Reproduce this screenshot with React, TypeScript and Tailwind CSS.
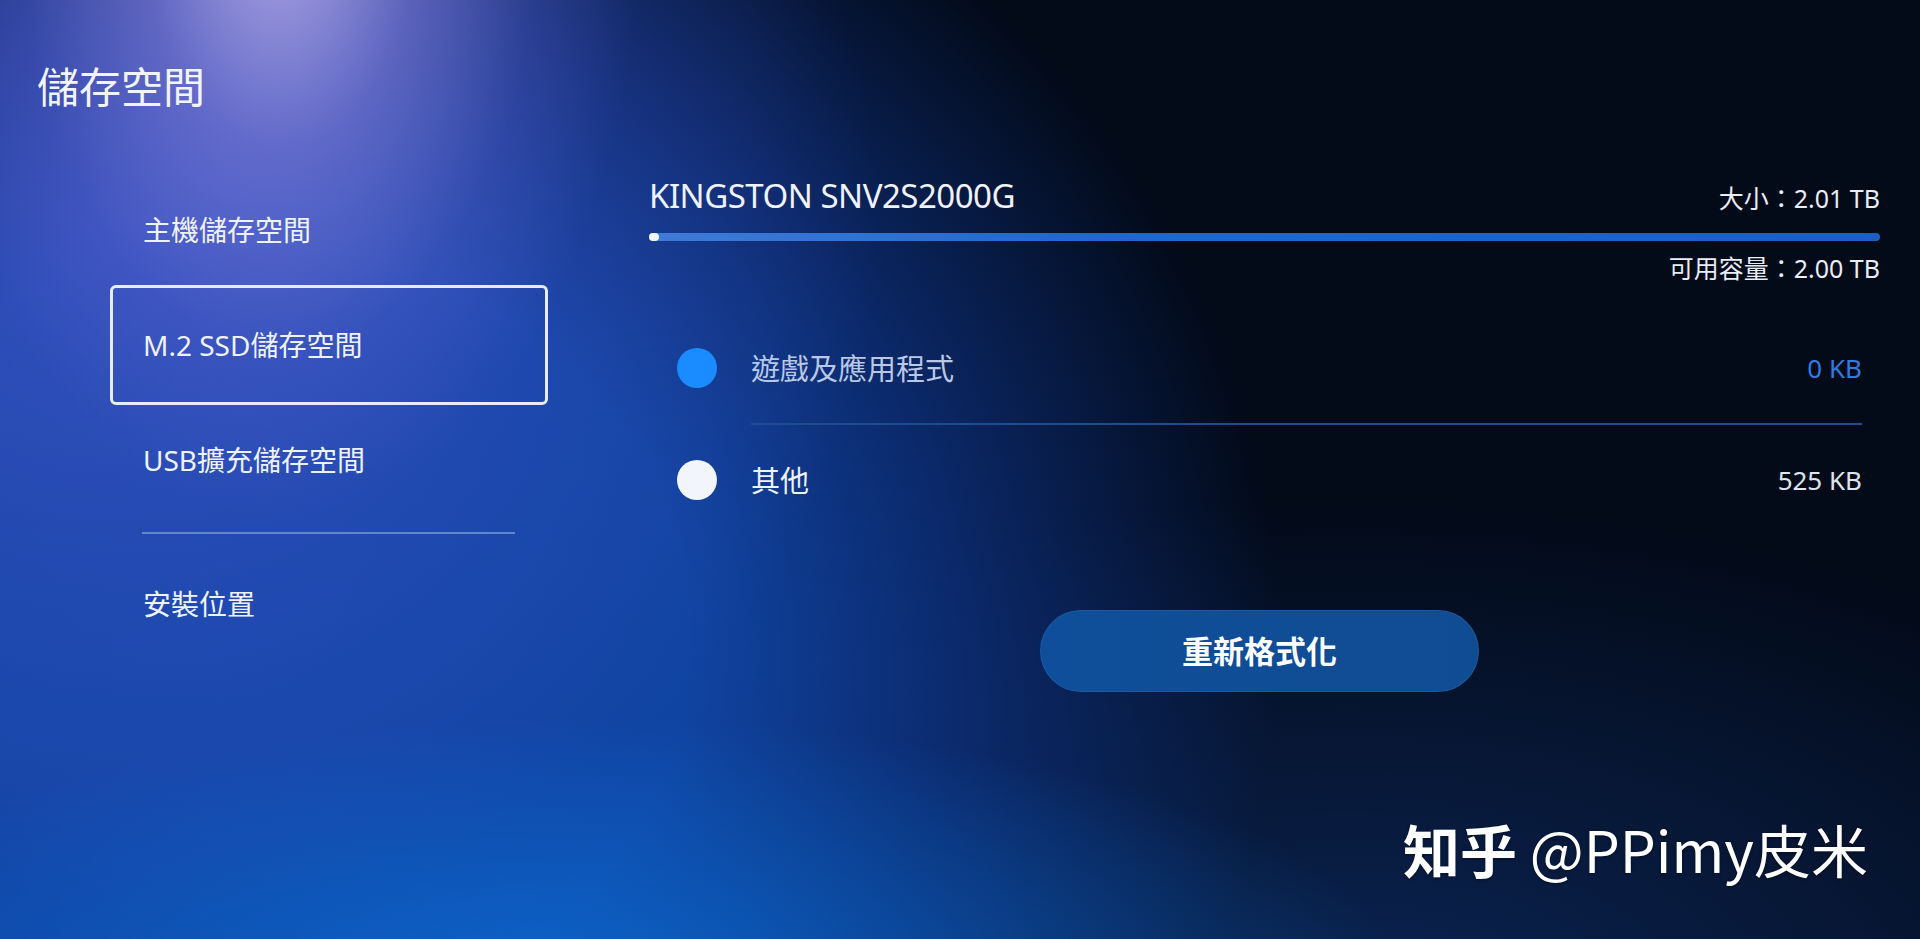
import React from 'react';

const menuItems = [
    { label: '主機儲存空間', selected: false },
    { label: 'M.2 SSD儲存空間', selected: true },
    { label: 'USB擴充儲存空間', selected: false },
];

const usage = [
    { label: '遊戲及應用程式', value: '0 KB', dot: 'bg-[#1a8cff]', text: 'text-[#b9c8e6]', valueText: 'text-[#2f7be0]' },
    { label: '其他', value: '525 KB', dot: 'bg-[#f2f5fb]', text: 'text-[#eef2fa]', valueText: 'text-[#dde4f0]' },
];

export default function App() {
    return (
        <div className="relative w-full h-[939px] overflow-hidden flex bg-[#030a18] font-['Noto_Sans','Noto_Sans_CJK_TC',sans-serif] text-white [background-image:radial-gradient(ellipse_400px_680px_at_280px_-90px,rgba(205,190,248,0.85),rgba(150,140,232,0.5)_35%,rgba(110,110,220,0.2)_65%,rgba(90,100,210,0)_90%),radial-gradient(ellipse_760px_700px_at_120px_220px,rgba(70,85,200,0.7),rgba(60,80,195,0.35)_55%,rgba(60,80,195,0)_100%),radial-gradient(ellipse_820px_260px_at_580px_980px,rgba(10,110,215,0.75),rgba(10,90,200,0)_100%),radial-gradient(ellipse_1180px_1050px_at_240px_640px,#1347a8_0%,#1044a2_38%,rgba(14,52,135,0.75)_60%,rgba(5,25,70,0)_88%),radial-gradient(ellipse_1000px_520px_at_1350px_1020px,rgba(14,48,110,0.7),rgba(5,20,50,0)_100%)]">
            {/* left menu */}
            <div className="w-[649px] shrink-0 pl-[37px] pt-[66px]">
                <h1 className="text-[42px] leading-none font-normal text-[#f1f4fc]">儲存空間</h1>

                <div className="mt-[64px] ml-[73px] w-[438px]">
                    {menuItems.map(item => (
                        <div
                            key={item.label}
                            className={`flex items-center px-[30px] rounded-[6px] border-[3px] text-[28px] leading-none text-[#eef2fc] ${item.selected
                                ? 'h-[120px] -my-[2.5px] border-[#e6ecfa]'
                                : 'h-[115px] border-transparent'
                                }`}
                        >
                            {item.label}
                        </div>
                    ))}
                    <div className="mt-[15px] ml-[32px] w-[373px] h-[2px] bg-[#7f9fe0]/70" />
                    <div className="mt-[12px] h-[115px] flex items-center px-[33px] text-[28px] leading-none text-[#eef2fc]">
                        安裝位置
                    </div>
                </div>
            </div>

            {/* right panel */}
            <div className="flex-1 pr-[40px] pt-[179px]">
                <div className="flex items-baseline justify-between leading-none">
                    <span className="text-[33px] tracking-[-0.5px] text-[#eef2fa]">KINGSTON SNV2S2000G</span>
                    <span className="text-[25px] text-[#e8edf7]">大小：2.01 TB</span>
                </div>

                <div className="mt-[21px] h-[8px] rounded-full flex bg-[linear-gradient(to_right,#3f7bd8,#2167cc_35%,#1b5fc6)]">
                    <div className="w-[10px] h-full rounded-full bg-[#f3f6fc]" />
                </div>

                <div className="mt-[15px] text-right text-[25px] leading-none text-[#e8edf7]">可用容量：2.00 TB</div>

                <div className="mt-[32px]">
                    {usage.map((row, i) => (
                        <div key={row.label}>
                            {i > 0 && <div className="ml-[102px] mr-[18px] h-[2px] bg-[#1d4c8f]" />}
                            <div className="h-[110px] flex items-center pl-[28px] pr-[18px]">
                                <div className={`w-[40px] h-[40px] rounded-full ${row.dot}`} />
                                <span className={`ml-[34px] text-[29px] leading-none ${row.text}`}>{row.label}</span>
                                <span className={`ml-auto text-[26px] leading-none ${row.valueText}`}>{row.value}</span>
                            </div>
                        </div>
                    ))}
                </div>

                <button className="mt-[75px] ml-[391px] w-[439px] h-[82px] rounded-full bg-[linear-gradient(to_right,#0f4e9a,#104c92)] border border-[#2a64ad]/50 text-[31px] font-bold text-white">
                    重新格式化
                </button>
            </div>

            {/* watermark */}
            <div className="absolute right-[52px] bottom-[62px] text-[57px] leading-none text-white font-['Noto_Sans_CJK_SC',sans-serif] [text-shadow:0_1px_3px_rgba(0,0,0,0.4)]">
                <span className="font-bold">知乎</span> @PPimy皮米
            </div>
        </div>
    );
}
